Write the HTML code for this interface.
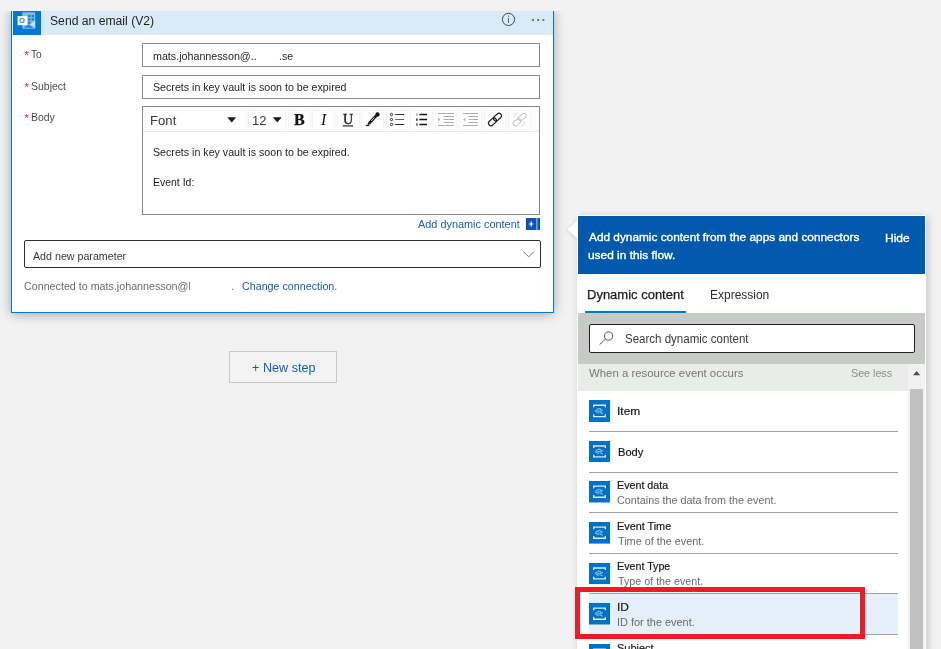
<!DOCTYPE html>
<html lang="en">
<head>
<meta charset="utf-8">
<title>Send an email (V2) - Add dynamic content</title>
<style>
html,body{margin:0;padding:0;background:#f2f2f2;}
body{width:941px;height:649px;overflow:hidden;font-family:"Liberation Sans",sans-serif;}
#root{position:relative;width:941px;height:649px;overflow:hidden;background:#f2f2f2;}
#root div,#root span,#root svg{position:absolute;box-sizing:border-box;}
#texts{left:0;top:0;width:941px;height:649px;will-change:transform;}
.t{line-height:1;white-space:pre;transform-origin:0 0;display:block;}
.card{left:11px;top:9px;width:543px;height:304px;background:#fff;border:1px solid #0078d4;box-shadow:0 1px 11px rgba(0,0,0,.32);}
.cover{left:0;top:0;width:941px;height:11px;background:#f2f2f2;}
.hdr{left:12px;top:11px;width:541px;height:24px;background:#d9eaf8;}
.tile{left:13px;top:11px;width:28px;height:24px;background:#0078d4;}
.inp{background:#fff;border:1px solid #8a8a8a;}
.tb{background:#fff;border:1px solid #f4f4f4;top:109.5px;height:20px;}
.sep{left:589px;width:309px;height:1px;background:#a3a3a3;}
</style>
</head>
<body>
<div id="root">
<div class="card"></div>
<div class="cover"></div>
<div class="hdr"></div>
<div class="tile"></div>
<svg style="left:13px;top:11px" width="28" height="24" viewBox="0 0 28 24">
<rect x="9.2" y="1.3" width="13" height="16.4" rx="0.8" fill="#fff" fill-opacity=".5"/>
<g fill="#0078d4" fill-opacity=".85">
<rect x="15.1" y="3.9" width="2.4" height="2.2"/><rect x="18.6" y="3.9" width="2.4" height="2.2"/>
<rect x="15.1" y="7.3" width="2.4" height="2.2"/><rect x="18.6" y="7.3" width="2.4" height="2.2"/>
<rect x="15.1" y="10.7" width="2.4" height="2.2"/>
</g>
<path d="M22.2 9.5 L17 13.3 L22.2 17 Z" fill="#fff" fill-opacity=".55"/>
<path d="M10.5 16.6 L15.5 13.6 L20.5 17 Z" fill="#0078d4" fill-opacity=".8"/>
<rect x="4.6" y="5.1" width="9.8" height="9.1" fill="#fff"/>
<circle cx="9.1" cy="9.4" r="2" fill="none" stroke="#4a9fe3" stroke-width="1.3"/>
</svg>
<svg style="left:500px;top:11px" width="50" height="18" viewBox="0 0 50 18">
<circle cx="8.5" cy="8.4" r="6.1" fill="none" stroke="#4a4a4a" stroke-width="1"/>
<rect x="8.05" y="4.7" width="0.95" height="1.1" fill="#5a5a5a"/><rect x="8.05" y="7" width="0.95" height="4.9" fill="#5a5a5a"/>
<rect x="32.1" y="8.1" width="1.8" height="1.8" fill="#5c5c5c"/><rect x="37.3" y="8.1" width="1.8" height="1.8" fill="#5c5c5c"/><rect x="42.5" y="8.1" width="1.8" height="1.8" fill="#5c5c5c"/>
</svg>
<div class="inp" style="left:142px;top:43px;width:398px;height:24px"></div>
<div class="inp" style="left:142px;top:75px;width:398px;height:24px"></div>
<div class="inp" style="left:142px;top:106px;width:398px;height:109px"></div>
<div style="left:143px;top:107px;width:396px;height:25px;background:#fcfcfc;border-bottom:1px solid #ebebeb"></div>
<div class="tb" style="left:144.5px;width:102.0px"></div>
<div class="tb" style="left:247.7px;width:38.8px"></div>
<div class="tb" style="left:288px;width:22.5px"></div>
<div class="tb" style="left:312px;width:23.0px"></div>
<div class="tb" style="left:336.5px;width:23.0px"></div>
<div class="tb" style="left:361px;width:23.0px"></div>
<div class="tb" style="left:385.7px;width:22.7px"></div>
<div class="tb" style="left:410px;width:23.0px"></div>
<div class="tb" style="left:434.5px;width:22.5px"></div>
<div class="tb" style="left:458.5px;width:23.0px"></div>
<div class="tb" style="left:483.7px;width:22.6px"></div>
<div class="tb" style="left:507.6px;width:23.6px"></div>
<svg style="left:142px;top:106px" width="398" height="27" viewBox="0 0 398 27">
<path d="M85.3 11.3 h8.8 l-4.4 5.1 z" fill="#1a1a1a"/>
<path d="M130.9 11.3 h8.8 l-4.4 5.1 z" fill="#1a1a1a"/>
<line x1="200.8" y1="19.9" x2="211" y2="19.9" stroke="#111" stroke-width="1.1"/>
<!-- pen -->
<g>
<path d="M227.4 17.0 L234.2 9.8" stroke="#111" stroke-width="2.7" stroke-linecap="butt"/>
<path d="M225.4 19.0 L226.2 16.0 L228.6 18.2 Z" fill="#111"/>
<circle cx="235.5" cy="8.5" r="2.15" fill="#111"/>
<path d="M229.3 14.9 L232.6 11.4" stroke="#fff" stroke-width="0.85"/>
<path d="M223.9 19.6 h3.4" stroke="#111" stroke-width="1.1"/>
</g>
<!-- bullet list -->
<g fill="none" stroke="#1a1a1a" stroke-width="0.9">
<circle cx="249.5" cy="8.5" r="1.15"/><circle cx="249.5" cy="13.5" r="1.15"/><circle cx="249.5" cy="18.5" r="1.15"/>
<path d="M253.1 8.5 H262.2 M253.1 18.5 H262.2"/><path d="M253.1 13.5 H262.2" stroke="#555"/>
</g>
<!-- numbered list -->
<g stroke="#111" stroke-width="1.5"><path d="M277.4 8.5 H285 M277.4 13.5 H285 M277.4 18.5 H285"/></g>
<g fill="#444"><rect x="274" y="7.4" width="1.6" height="2.4" fill-opacity=".45"/><rect x="274" y="12.4" width="1.8" height="2.4" fill-opacity=".9"/><rect x="274" y="17.3" width="1.8" height="2.4" fill-opacity=".8"/></g>
<!-- indent -->
<g stroke="#ababab" stroke-width="1" fill="none">
<path d="M296 7.5 H312 M301.5 10.5 H312 M301.5 13.5 H312 M301.5 16.5 H312 M296 19.5 H312"/>
<path d="M321 7.5 H336 M326.5 10.5 H336 M326.5 13.5 H336 M326.5 16.5 H336 M321 19.5 H336"/>
</g>
<path d="M296 11.5 L298.2 13.5 L296 15.5 Z" fill="#b5b5b5"/>
<path d="M323.4 11.5 L321.2 13.5 L323.4 15.5 Z" fill="#b5b5b5"/>
<!-- link -->
<g fill="none" stroke="#181818" stroke-width="1.15">
<rect x="-4.5" y="-2.5" width="9" height="5" rx="2.5" transform="translate(350.5 15.8) rotate(-42)"/>
<rect x="-4.5" y="-2.5" width="9" height="5" rx="2.5" transform="translate(355.5 11.2) rotate(-42)"/>
</g>
<!-- unlink -->
<g fill="none" stroke="#c2c2c2" stroke-width="1">
<rect x="-4.4" y="-2.3" width="8.8" height="4.6" rx="2.3" transform="translate(375 16.2) rotate(-38)"/>
<rect x="-4.4" y="-2.3" width="8.8" height="4.6" rx="2.3" transform="translate(380.2 11) rotate(-38)"/>
<path d="M372.2 7.4 l1.6 1.6 M374.8 6.4 l.4 2 M371.2 10 l2 .4 M382.6 19.6 l-1.6 -1.6 M380 20.6 l-.4 -2 M383.6 17 l-2 -.4" stroke-width=".8"/>
</g>
</svg>
<svg style="left:526px;top:218px" width="14" height="12" viewBox="0 0 14 12">
<rect width="14" height="12" fill="#0b55ad"/>
<path d="M2.8 6 H7.6 M5.2 3.6 V8.4" stroke="#fff" stroke-width="1.2"/>
<rect x="10.2" y="0" width="1.3" height="12" fill="#fff" fill-opacity=".55"/>
</svg>
<div style="left:24px;top:240px;width:517px;height:28px;background:#fff;border:1px solid #2f2f2f;border-radius:2px"></div>
<svg style="left:520px;top:248px" width="18" height="12" viewBox="0 0 18 12"><path d="M3.3 3.6 L8.7 8.8 L14.1 3.6" fill="none" stroke="#777" stroke-width="1"/></svg>
<div style="left:189.3px;top:282px;width:1.1px;height:8.2px;background:#8a8a8a"></div>
<div style="left:229px;top:351px;width:108px;height:32px;border:1px solid #c8c8c8;background:#f3f3f3"></div>
<div style="left:577px;top:215px;width:349px;height:460px;background:#fff;box-shadow:2px 2px 8px rgba(0,0,0,.19)"></div>
<svg style="left:560px;top:216px" width="20" height="28" viewBox="0 0 20 28"><path d="M17.6 4.2 L7.3 13.6 L17.6 23 Z" fill="#fff" style="filter:drop-shadow(-1px 1px 1.5px rgba(0,0,0,.12))"/></svg>
<div style="left:578px;top:216px;width:347px;height:58px;background:#0059ad"></div>
<div style="left:585px;top:310.6px;width:101px;height:2.4px;background:#0078d4"></div>
<div style="left:578px;top:313px;width:347px;height:51px;background:#c8cac8"></div>
<div style="left:589px;top:324px;width:326px;height:28.6px;background:#fff;border:1px solid #222;border-radius:2px"></div>
<svg style="left:596.5px;top:327.5px" width="20" height="20" viewBox="0 0 20 20"><circle cx="11.6" cy="8" r="4.1" fill="none" stroke="#555" stroke-width="1"/><path d="M8.6 11 L2.6 16.6" stroke="#555" stroke-width="1"/></svg>
<div style="left:578px;top:364px;width:330px;height:26.6px;background:#eaecea"></div>
<div style="left:908px;top:364px;width:17px;height:300px;background:#f1f1f1"></div>
<div style="left:910.2px;top:389.4px;width:12.8px;height:280px;background:#c1c1c1"></div>
<svg style="left:908px;top:364px" width="17" height="17" viewBox="0 0 17 17"><path d="M5 11.3 L12.2 11.3 L8.6 7 Z" fill="#505050"/></svg>
<div style="left:589px;top:594px;width:309px;height:40px;background:#e5f0fd"></div>
<div class="sep" style="top:431.2px"></div>
<div class="sep" style="top:471.8px"></div>
<div class="sep" style="top:512.2px"></div>
<div class="sep" style="top:553.2px"></div>
<div class="sep" style="top:593.2px"></div>
<div class="sep" style="top:634.0px"></div>
<svg style="left:589px;top:400.0px" width="21" height="22" viewBox="0 0 21 21.5" preserveAspectRatio="none">
<rect width="21" height="21.5" fill="#0072c6"/>
<path d="M4.7 7.2 V5.1 H16.3 V7.2 M4.7 14 V16.2 H16.3 V14" fill="none" stroke="#fff" stroke-width="1.35" stroke-opacity=".86"/>
<path d="M6.2 10.7 L9.6 8.3 L12 8.7 M6.2 10.7 L9.8 13.1 M8.4 10.9 L13 10.7 M11 9 L14 10.1 M10.6 11.9 L14 13.3" fill="none" stroke="#fff" stroke-width="1.1" stroke-opacity=".5"/>
</svg>
<svg style="left:589px;top:441.0px" width="21" height="21" viewBox="0 0 21 21.5" preserveAspectRatio="none">
<rect width="21" height="21.5" fill="#0072c6"/>
<path d="M4.7 7.2 V5.1 H16.3 V7.2 M4.7 14 V16.2 H16.3 V14" fill="none" stroke="#fff" stroke-width="1.35" stroke-opacity=".86"/>
<path d="M6.2 10.7 L9.6 8.3 L12 8.7 M6.2 10.7 L9.8 13.1 M8.4 10.9 L13 10.7 M11 9 L14 10.1 M10.6 11.9 L14 13.3" fill="none" stroke="#fff" stroke-width="1.1" stroke-opacity=".5"/>
</svg>
<svg style="left:589px;top:481.3px" width="21" height="21.5" viewBox="0 0 21 21.5" preserveAspectRatio="none">
<rect width="21" height="21.5" fill="#0072c6"/>
<path d="M4.7 7.2 V5.1 H16.3 V7.2 M4.7 14 V16.2 H16.3 V14" fill="none" stroke="#fff" stroke-width="1.35" stroke-opacity=".86"/>
<path d="M6.2 10.7 L9.6 8.3 L12 8.7 M6.2 10.7 L9.8 13.1 M8.4 10.9 L13 10.7 M11 9 L14 10.1 M10.6 11.9 L14 13.3" fill="none" stroke="#fff" stroke-width="1.1" stroke-opacity=".5"/>
</svg>
<svg style="left:589px;top:522.0px" width="21" height="21.6" viewBox="0 0 21 21.5" preserveAspectRatio="none">
<rect width="21" height="21.5" fill="#0072c6"/>
<path d="M4.7 7.2 V5.1 H16.3 V7.2 M4.7 14 V16.2 H16.3 V14" fill="none" stroke="#fff" stroke-width="1.35" stroke-opacity=".86"/>
<path d="M6.2 10.7 L9.6 8.3 L12 8.7 M6.2 10.7 L9.8 13.1 M8.4 10.9 L13 10.7 M11 9 L14 10.1 M10.6 11.9 L14 13.3" fill="none" stroke="#fff" stroke-width="1.1" stroke-opacity=".5"/>
</svg>
<svg style="left:589px;top:563.0px" width="21" height="21" viewBox="0 0 21 21.5" preserveAspectRatio="none">
<rect width="21" height="21.5" fill="#0072c6"/>
<path d="M4.7 7.2 V5.1 H16.3 V7.2 M4.7 14 V16.2 H16.3 V14" fill="none" stroke="#fff" stroke-width="1.35" stroke-opacity=".86"/>
<path d="M6.2 10.7 L9.6 8.3 L12 8.7 M6.2 10.7 L9.8 13.1 M8.4 10.9 L13 10.7 M11 9 L14 10.1 M10.6 11.9 L14 13.3" fill="none" stroke="#fff" stroke-width="1.1" stroke-opacity=".5"/>
</svg>
<svg style="left:589px;top:603.3px" width="21" height="21.5" viewBox="0 0 21 21.5" preserveAspectRatio="none">
<rect width="21" height="21.5" fill="#0072c6"/>
<path d="M4.7 7.2 V5.1 H16.3 V7.2 M4.7 14 V16.2 H16.3 V14" fill="none" stroke="#fff" stroke-width="1.35" stroke-opacity=".86"/>
<path d="M6.2 10.7 L9.6 8.3 L12 8.7 M6.2 10.7 L9.8 13.1 M8.4 10.9 L13 10.7 M11 9 L14 10.1 M10.6 11.9 L14 13.3" fill="none" stroke="#fff" stroke-width="1.1" stroke-opacity=".5"/>
</svg>
<svg style="left:589px;top:644.3px" width="21" height="21.5" viewBox="0 0 21 21.5" preserveAspectRatio="none">
<rect width="21" height="21.5" fill="#0072c6"/>
<path d="M4.7 7.2 V5.1 H16.3 V7.2 M4.7 14 V16.2 H16.3 V14" fill="none" stroke="#fff" stroke-width="1.35" stroke-opacity=".86"/>
<path d="M6.2 10.7 L9.6 8.3 L12 8.7 M6.2 10.7 L9.8 13.1 M8.4 10.9 L13 10.7 M11 9 L14 10.1 M10.6 11.9 L14 13.3" fill="none" stroke="#fff" stroke-width="1.1" stroke-opacity=".5"/>
</svg>
<div style="left:575px;top:587px;width:290px;height:52px;border:5px solid #ed1c24;z-index:5"></div>

<div id="texts">
<span class="t" style="left:49.55px;top:14.90px;font-size:12.71px;color:#1f1f1f;font-family:'Liberation Sans', sans-serif;transform:scaleX(0.9575);">Send an email (V2)</span>
<span class="t" style="left:24.47px;top:50.00px;font-size:11.25px;color:#e8112d;font-family:'Liberation Sans', sans-serif;transform:scaleX(1.0000);">*</span>
<span class="t" style="left:30.66px;top:48.80px;font-size:10.76px;color:#4a4a4a;font-family:'Liberation Sans', sans-serif;transform:scaleX(0.9463);">To</span>
<span class="t" style="left:24.47px;top:81.90px;font-size:11.25px;color:#e8112d;font-family:'Liberation Sans', sans-serif;transform:scaleX(1.0000);">*</span>
<span class="t" style="left:30.86px;top:80.70px;font-size:10.76px;color:#4a4a4a;font-family:'Liberation Sans', sans-serif;transform:scaleX(0.9753);">Subject</span>
<span class="t" style="left:24.47px;top:112.90px;font-size:11.25px;color:#e8112d;font-family:'Liberation Sans', sans-serif;transform:scaleX(1.0000);">*</span>
<span class="t" style="left:30.55px;top:111.70px;font-size:10.76px;color:#4a4a4a;font-family:'Liberation Sans', sans-serif;transform:scaleX(0.9716);">Body</span>
<span class="t" style="left:152.72px;top:50.90px;font-size:10.76px;color:#1e1e1e;font-family:'Liberation Sans', sans-serif;transform:scaleX(0.9953);">mats.johannesson@..</span>
<span class="t" style="left:279.45px;top:50.90px;font-size:10.76px;color:#1e1e1e;font-family:'Liberation Sans', sans-serif;transform:scaleX(0.9806);">.se</span>
<span class="t" style="left:153.04px;top:82.00px;font-size:10.76px;color:#1e1e1e;font-family:'Liberation Sans', sans-serif;transform:scaleX(0.9904);">Secrets in key vault is soon to be expired</span>
<span class="t" style="left:149.51px;top:114.60px;font-size:12.71px;color:#3a3a3a;font-family:'Liberation Sans', sans-serif;transform:scaleX(1.0349);">Font</span>
<span class="t" style="left:252.40px;top:114.60px;font-size:12.71px;color:#3a3a3a;font-family:'Liberation Sans', sans-serif;transform:scaleX(1.0246);">12</span>
<span class="t" style="left:293.51px;top:111.60px;font-size:15.84px;color:#111;font-family:'Liberation Serif', serif;font-weight:bold;-webkit-text-stroke:0.25px currentColor;transform:scaleX(1.0119);">B</span>
<span class="t" style="left:321.02px;top:111.60px;font-size:15.84px;color:#111;font-family:'Liberation Serif', serif;font-style:italic;transform:scaleX(1.0000);">I</span>
<span class="t" style="left:342.73px;top:112.00px;font-size:14.85px;color:#111;font-family:'Liberation Serif', serif;-webkit-text-stroke:0.3px currentColor;transform:scaleX(0.9470);">U</span>
<span class="t" style="left:152.84px;top:146.80px;font-size:10.76px;color:#1e1e1e;font-family:'Liberation Sans', sans-serif;transform:scaleX(0.9911);">Secrets in key vault is soon to be expired.</span>
<span class="t" style="left:152.58px;top:176.90px;font-size:10.76px;color:#1e1e1e;font-family:'Liberation Sans', sans-serif;transform:scaleX(0.9735);">Event Id:</span>
<span class="t" style="left:417.78px;top:218.00px;font-size:11.74px;color:#1160b7;font-family:'Liberation Sans', sans-serif;transform:scaleX(0.9286);">Add dynamic content</span>
<span class="t" style="left:33.33px;top:250.00px;font-size:11.74px;color:#383838;font-family:'Liberation Sans', sans-serif;transform:scaleX(0.9094);">Add new parameter</span>
<span class="t" style="left:24.03px;top:281.00px;font-size:11.25px;color:#6b6b6b;font-family:'Liberation Sans', sans-serif;transform:scaleX(0.9518);">Connected to mats.johannesson@</span>
<span class="t" style="left:231.27px;top:281.00px;font-size:11.25px;color:#6b6b6b;font-family:'Liberation Sans', sans-serif;transform:scaleX(1.0000);">.</span>
<span class="t" style="left:241.84px;top:281.00px;font-size:11.25px;color:#1160b7;font-family:'Liberation Sans', sans-serif;transform:scaleX(0.9522);">Change connection.</span>
<span class="t" style="left:251.52px;top:361.10px;font-size:13.20px;color:#1160b7;font-family:'Liberation Sans', sans-serif;transform:scaleX(0.9577);">+ New step</span>
<span class="t" style="left:588.80px;top:231.00px;font-size:11.74px;color:#ffffff;font-family:'Liberation Sans', sans-serif;-webkit-text-stroke:0.35px currentColor;transform:scaleX(1.0083);">Add dynamic content from the apps and connectors</span>
<span class="t" style="left:588.15px;top:248.60px;font-size:11.74px;color:#ffffff;font-family:'Liberation Sans', sans-serif;-webkit-text-stroke:0.35px currentColor;transform:scaleX(1.0137);">used in this flow.</span>
<span class="t" style="left:884.80px;top:231.90px;font-size:11.74px;color:#ffffff;font-family:'Liberation Sans', sans-serif;-webkit-text-stroke:0.35px currentColor;transform:scaleX(1.0236);">Hide</span>
<span class="t" style="left:586.78px;top:289.10px;font-size:12.71px;color:#1c1c1c;font-family:'Liberation Sans', sans-serif;-webkit-text-stroke:0.25px currentColor;transform:scaleX(1.0231);">Dynamic content</span>
<span class="t" style="left:709.80px;top:289.00px;font-size:12.71px;color:#2c2c2c;font-family:'Liberation Sans', sans-serif;transform:scaleX(0.9429);">Expression</span>
<span class="t" style="left:625.01px;top:332.90px;font-size:12.71px;color:#3a3a3a;font-family:'Liberation Sans', sans-serif;transform:scaleX(0.9067);">Search dynamic content</span>
<span class="t" style="left:588.96px;top:366.80px;font-size:11.74px;color:#767676;font-family:'Liberation Sans', sans-serif;transform:scaleX(0.9702);">When a resource event occurs</span>
<span class="t" style="left:851.41px;top:366.80px;font-size:11.74px;color:#8c8c8c;font-family:'Liberation Sans', sans-serif;transform:scaleX(0.9125);">See less</span>
<span class="t" style="left:616.74px;top:404.80px;font-size:11.74px;color:#161616;font-family:'Liberation Sans', sans-serif;-webkit-text-stroke:0.2px currentColor;transform:scaleX(1.0162);">Item</span>
<span class="t" style="left:617.65px;top:445.80px;font-size:11.74px;color:#161616;font-family:'Liberation Sans', sans-serif;-webkit-text-stroke:0.2px currentColor;transform:scaleX(0.9459);">Body</span>
<span class="t" style="left:616.79px;top:478.80px;font-size:11.74px;color:#161616;font-family:'Liberation Sans', sans-serif;-webkit-text-stroke:0.2px currentColor;transform:scaleX(0.9120);">Event data</span>
<span class="t" style="left:617.26px;top:493.70px;font-size:11.74px;color:#6b6b6b;font-family:'Liberation Sans', sans-serif;transform:scaleX(0.9189);">Contains the data from the event.</span>
<span class="t" style="left:616.76px;top:519.80px;font-size:11.74px;color:#161616;font-family:'Liberation Sans', sans-serif;-webkit-text-stroke:0.2px currentColor;transform:scaleX(0.9227);">Event Time</span>
<span class="t" style="left:617.98px;top:535.00px;font-size:11.74px;color:#6b6b6b;font-family:'Liberation Sans', sans-serif;transform:scaleX(0.9228);">Time of the event.</span>
<span class="t" style="left:616.82px;top:560.10px;font-size:11.74px;color:#161616;font-family:'Liberation Sans', sans-serif;-webkit-text-stroke:0.2px currentColor;transform:scaleX(0.9115);">Event Type</span>
<span class="t" style="left:617.98px;top:575.20px;font-size:11.74px;color:#6b6b6b;font-family:'Liberation Sans', sans-serif;transform:scaleX(0.9136);">Type of the event.</span>
<span class="t" style="left:616.76px;top:600.70px;font-size:11.74px;color:#161616;font-family:'Liberation Sans', sans-serif;-webkit-text-stroke:0.2px currentColor;transform:scaleX(1.0133);">ID</span>
<span class="t" style="left:617.16px;top:616.20px;font-size:11.74px;color:#6b6b6b;font-family:'Liberation Sans', sans-serif;transform:scaleX(0.9315);">ID for the event.</span>
<span class="t" style="left:617.16px;top:642.20px;font-size:11.74px;color:#161616;font-family:'Liberation Sans', sans-serif;-webkit-text-stroke:0.2px currentColor;transform:scaleX(0.9343);">Subject</span>
</div>
</div>
</body>
</html>
